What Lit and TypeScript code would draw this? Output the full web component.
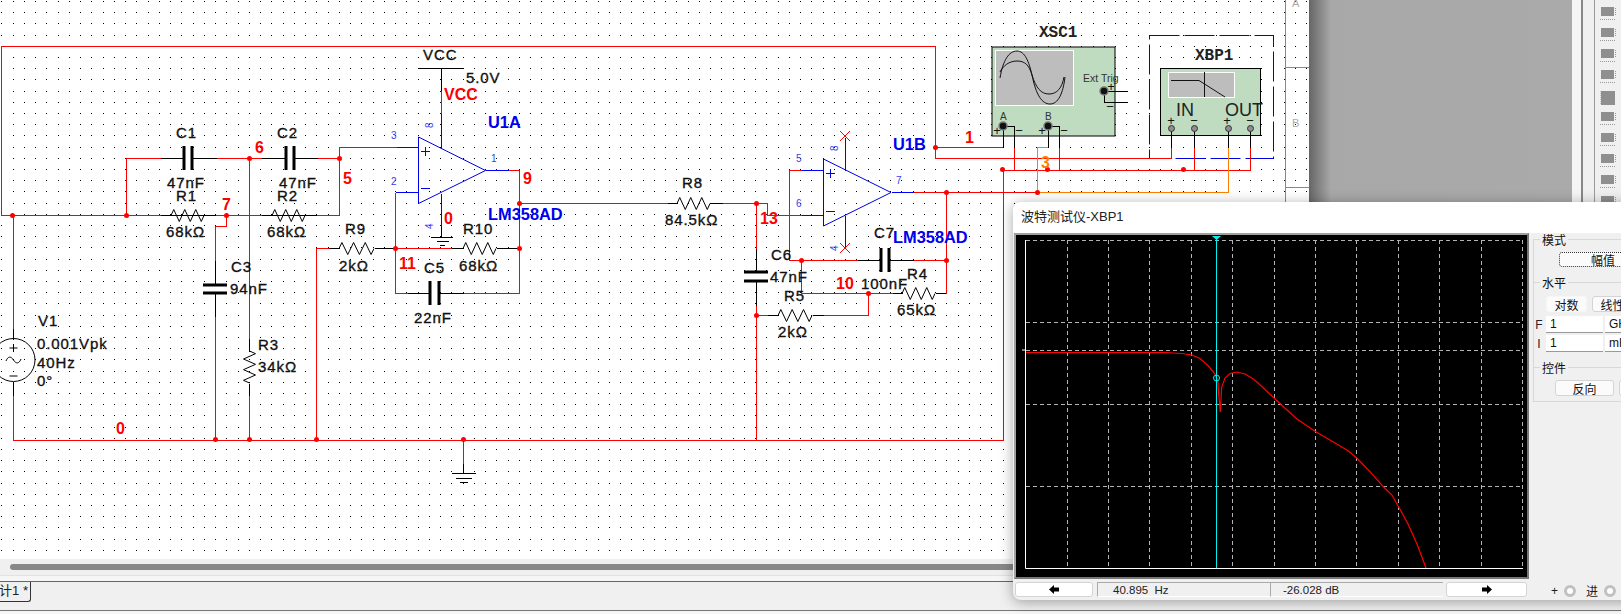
import { LitElement, css, html, svg } from 'lit'
import { customElement } from 'lit/decorators.js'

type Pt = [number, number]
type Wire = [string, ...Pt[]]

const RED = '#ff0000'
const BLK = '#000000'
const BLU = '#0000ff'
const ORG = '#ff8000'

// schematic nets, in sheet pixels
const WIRES: Wire[] = [
  [RED, [1, 215], [1, 46], [935, 46], [935, 147], [1003, 147]],
  [BLK, [1003, 147], [1003, 126]],
  [RED, [935, 147], [935, 158], [1171, 158], [1171, 147]],
  [BLK, [1171, 147], [1171, 128]],
  [RED, [1, 215], [160, 215]],
  [BLK, [160, 215], [215, 215]],
  [RED, [215, 215], [261, 215]],
  [BLK, [261, 215], [316, 215]],
  [RED, [316, 215], [339, 215], [339, 147], [396, 147]],
  [BLU, [396, 147], [418, 147]],
  [RED, [13, 215], [13, 328]],
  [BLK, [13, 328], [13, 339]],
  [BLK, [13, 381], [13, 395]],
  [RED, [13, 395], [13, 440], [1003, 440], [1003, 170]],
  [RED, [1003, 170], [1250, 170], [1250, 147]],
  [BLK, [1250, 147], [1250, 128]],
  [RED, [1014, 170], [1014, 147]],
  [BLK, [1014, 147], [1014, 126], [1003, 126]],
  [RED, [1059, 170], [1059, 147]],
  [BLK, [1059, 147], [1059, 126], [1048, 126]],
  [RED, [1194, 170], [1194, 147]],
  [BLK, [1194, 147], [1194, 128]],
  [RED, [126, 215], [126, 158], [160, 158]],
  [BLK, [160, 158], [184, 158]],
  [BLK, [192, 158], [216, 158]],
  [RED, [216, 158], [261, 158]],
  [BLK, [261, 158], [286, 158]],
  [BLK, [294, 158], [317, 158]],
  [RED, [317, 158], [339, 158]],
  [RED, [226, 215], [226, 226], [215, 226], [215, 260]],
  [BLK, [215, 260], [215, 285]],
  [BLK, [215, 293], [215, 316]],
  [RED, [215, 316], [215, 440]],
  [RED, [249, 158], [249, 338]],
  [BLK, [249, 338], [249, 351]],
  [BLK, [249, 383], [249, 395]],
  [RED, [249, 395], [249, 440]],
  [RED, [316, 440], [316, 248], [328, 248]],
  [BLK, [328, 248], [339, 248]],
  [BLK, [374, 248], [395, 248]],
  [RED, [395, 248], [451, 248]],
  [BLK, [451, 248], [463, 248]],
  [BLK, [496, 248], [519, 248]],
  [RED, [395, 192], [395, 293], [407, 293]],
  [BLK, [407, 293], [430, 293]],
  [BLK, [439, 293], [463, 293]],
  [RED, [463, 293], [519, 293], [519, 170], [508, 170]],
  [BLU, [508, 170], [485, 170]],
  [BLU, [395, 192], [418, 192]],
  [BLU, [441, 148], [441, 113]],
  [RED, [441, 113], [441, 90]],
  [BLK, [441, 90], [441, 68]],
  [BLK, [418, 68], [463, 68]],
  [BLU, [441, 193], [441, 226]],
  [BLK, [441, 226], [441, 237]],
  [BLK, [430, 237], [452, 237]],
  [BLK, [436, 241], [448, 241]],
  [BLK, [439, 245], [444, 245]],
  [RED, [519, 203], [667, 203]],
  [BLK, [667, 203], [677, 203]],
  [BLK, [710, 203], [722, 203]],
  [RED, [722, 203], [767, 203], [767, 215], [801, 215]],
  [BLU, [801, 215], [823, 215]],
  [RED, [789, 260], [789, 170], [801, 170]],
  [BLU, [801, 170], [823, 170]],
  [RED, [756, 203], [756, 248]],
  [BLK, [756, 248], [756, 272]],
  [BLK, [756, 281], [756, 305]],
  [RED, [756, 305], [756, 440]],
  [RED, [756, 315], [767, 315]],
  [BLK, [767, 315], [778, 315]],
  [BLK, [812, 315], [823, 315]],
  [RED, [823, 315], [868, 315], [868, 293]],
  [RED, [801, 260], [801, 293], [892, 293]],
  [BLK, [892, 293], [902, 293]],
  [BLK, [935, 293], [946, 293]],
  [RED, [946, 293], [946, 192]],
  [RED, [789, 260], [857, 260]],
  [BLK, [857, 260], [881, 260]],
  [BLK, [889, 260], [913, 260]],
  [RED, [913, 260], [946, 260]],
  [BLU, [891, 192], [913, 192]],
  [RED, [913, 192], [1037, 192]],
  [ORG, [1037, 192], [1228, 192], [1228, 147]],
  [BLK, [1228, 147], [1228, 128]],
  [ORG, [1037, 192], [1037, 147], [1048, 147]],
  [BLK, [1048, 147], [1048, 126]],
  [BLU, [845, 170], [845, 137]],
  [BLU, [845, 215], [845, 248]],
  [RED, [463, 440], [463, 463]],
  [BLK, [463, 463], [463, 473]],
  [BLK, [451, 473], [475, 473]],
  [BLK, [455, 478], [471, 478]],
  [BLK, [459, 482], [467, 482]],
  [BLK, [1104, 91], [1127, 91]],
  [BLK, [1104, 91], [1104, 102], [1127, 102]],
]

const JUNCTIONS: Pt[] = [
  [12, 215], [126, 215], [249, 158], [226, 215], [339, 158], [395, 248], [519, 203], [519, 248],
  [756, 203], [756, 315], [801, 260], [946, 192], [946, 260], [868, 293], [935, 147], [1002, 169],
  [1047, 169], [1183, 169], [1037, 192], [215, 439], [249, 439], [316, 439], [463, 439],
]

// [x0, x1, y]
const RES_H: [number, number, number][] = [
  [171, 204, 215], [272, 305, 215], [339, 374, 248], [463, 496, 248],
  [677, 710, 203], [778, 812, 315], [902, 935, 293],
]

// x or y pair of plates, centre, half length
const CAP_V: [number, number, number, number][] = [
  [184, 192, 158, 12], [286, 294, 158, 12], [430, 439, 293, 12], [881, 889, 260, 12],
]
const CAP_H: [number, number, number, number][] = [
  [285, 293, 215, 12], [272, 281, 756, 12],
]

const LABELS: [string, number, number, string][] = [
  ['C1', 176, 138, 'lbl'], ['C2', 277, 138, 'lbl'], ['47nF', 167, 188, 'lbl'], ['47nF', 279, 188, 'lbl'],
  ['R1', 176, 201, 'lbl'], ['R2', 277, 201, 'lbl'], ['68kΩ', 166, 237, 'lbl'], ['68kΩ', 267, 237, 'lbl'],
  ['R9', 345, 234, 'lbl'], ['2kΩ', 339, 271, 'lbl'], ['R10', 463, 234, 'lbl'], ['68kΩ', 459, 271, 'lbl'],
  ['C5', 424, 273, 'lbl'], ['22nF', 414, 323, 'lbl'], ['C3', 231, 272, 'lbl'], ['94nF', 230, 294, 'lbl'],
  ['VCC', 423, 60, 'lbl'], ['5.0V', 466, 83, 'lbl'], ['V1', 38, 326, 'lbl'], ['0.001Vpk', 37, 349, 'lbl'],
  ['40Hz', 37, 368, 'lbl'], ['0°', 37, 386, 'lbl'], ['R3', 258, 350, 'lbl'], ['34kΩ', 258, 372, 'lbl'],
  ['R8', 682, 188, 'lbl'], ['84.5kΩ', 665, 225, 'lbl'], ['C6', 771, 260, 'lbl'], ['47nF', 770, 282, 'lbl'],
  ['C7', 874, 238, 'lbl'], ['100nF', 861, 289, 'lbl'], ['R4', 907, 279, 'lbl'], ['R5', 784, 301, 'lbl'],
  ['65kΩ', 897, 315, 'lbl'], ['2kΩ', 778, 337, 'lbl'],
  ['6', 255, 153, 'net'], ['5', 343, 184, 'net'], ['7', 222, 210, 'net'], ['11', 399, 269, 'net'],
  ['VCC', 444, 100, 'net'], ['9', 523, 184, 'net'], ['0', 444, 224, 'net'], ['0', 116, 434, 'net'],
  ['1', 965, 143, 'net'], ['13', 760, 224, 'net'], ['10', 836, 289, 'net'], ['3', 1041, 168, 'net orange'],
  ['U1A', 488, 128, 'ref'], ['LM358AD', 488, 220, 'ref'], ['U1B', 893, 150, 'ref'], ['LM358AD', 893, 243, 'ref'],
  ['3', 391, 139, 'pin'], ['1', 491, 162, 'pin'], ['2', 391, 185, 'pin'], ['5', 796, 162, 'pin'], ['7', 896, 184, 'pin'], ['6', 796, 207, 'pin'],
  ['XSC1', 1039, 37, 'inst'], ['XBP1', 1195, 60, 'inst'],
  ['Ext Trig', 1083, 82, 'trig'], ['A', 1000, 120, 'term'], ['B', 1045, 120, 'term'],
  ['IN', 1176, 116, 'io'], ['OUT', 1225, 116, 'io'],
]

const ROTATED: [string, number, number][] = [['8', 433, 128], ['4', 433, 229], ['8', 838, 151], ['4', 838, 251]]

const MARKS: [string, number, number][] = [
  ['+', 997, 135], ['−', 1019, 135], ['+', 1042, 135], ['−', 1064, 135],
  ['+', 1111, 91], ['−', 1110, 111],
  ['+', 1171, 125], ['−', 1194, 125], ['+', 1227, 125], ['−', 1250, 125],
]

const dotPath = () => {
  let d = ''
  for (let i = 0; i < 117; i++) {
    for (let j = 0; j < 50; j++) {
      d += `M${Math.ceil(1 + i * 11.25)} ${Math.round(1 + j * 11.2)}h1v1h-1z`
    }
  }
  return d
}
const DOTS = dotPath()

const zigH = (x0: number, x1: number, y: number) => {
  const s = (x1 - x0) / 6
  let d = `M${x0} ${y + 0.5}`
  for (let i = 0; i < 6; i++) {
    d += `L${x0 + s * (i + 0.5)} ${y + 0.5 + (i % 2 ? 6 : -6)}`
  }
  return d + `L${x1} ${y + 0.5}`
}

const zigV = (x: number, y0: number, y1: number) => {
  const s = (y1 - y0) / 6
  let d = `M${x + 0.5} ${y0}`
  for (let i = 0; i < 6; i++) {
    d += `L${x + 0.5 + (i % 2 ? -6 : 6)} ${y0 + s * (i + 0.5)}`
  }
  return d + `L${x + 0.5} ${y1}`
}

const GRID_X = Array.from({ length: 12 }, (_, i) => 1066.5 + i * 41.4)
const GRID_Y = [241, 323, 351, 405, 487]

const CURVE = 'M1026 353.5H1165L1182 354.5L1192 356L1200 359.5L1208 366.5L1215 375L1218 383L1218.6 394L1220.3 413L1221.7 388L1225 379L1230 374.5L1237 373L1245 375L1251 378.5L1257 383L1273 398L1287 411L1297 420L1315 432.3L1333 442.7L1348 451.7L1357 459.3L1370 472.7L1383 487.3L1392 496L1398 506.7L1408 525L1417 545L1426 569'

@customElement('app-root')
export class AppRoot extends LitElement {
  static styles = css`
    :host {
      display: block;
      font-family: "Liberation Sans", "Noto Sans CJK SC", sans-serif;
    }
    .app {
      position: relative;
      width: 1621px;
      height: 614px;
      overflow: hidden;
      background: #f0f0f0;
      display: flex;
      flex-direction: column;
    }
    .main {
      display: flex;
      height: 559px;
    }
    .sheet {
      display: block;
      width: 1309px;
      height: 559px;
      flex-shrink: 0;
      background: #fff;
    }
    .sheet .lbl {
      font: 15px "Liberation Sans", sans-serif;
      letter-spacing: 0.9px;
      fill: #111;
      stroke: #111;
      stroke-width: 0.35px;
    }
    .sheet .net {
      font: bold 16px "Liberation Sans", sans-serif;
      fill: #f00;
    }
    .sheet .orange {
      fill: #ff8000;
    }
    .sheet .ref {
      font: bold 16.4px "Liberation Sans", sans-serif;
      fill: #0000ee;
    }
    .sheet .pin {
      font: 10px "Liberation Sans", sans-serif;
      fill: #3a3aee;
    }
    .sheet .inst {
      font: bold 16px "Liberation Mono", monospace;
      fill: #222;
    }
    .sheet .trig {
      font: 10.5px "Liberation Sans", sans-serif;
      fill: #333;
    }
    .sheet .term {
      font: 10px "Liberation Sans", sans-serif;
      fill: #333;
    }
    .sheet .io {
      font: 18px "Liberation Sans", sans-serif;
      fill: #222;
    }
    .sheet .mark {
      font: 13px "Liberation Sans", sans-serif;
      fill: #111;
      text-anchor: middle;
    }
    .sheet .ruler {
      font: 11px "Liberation Sans", sans-serif;
      fill: #aaa;
    }
    .gutter {
      flex: 1;
      background: linear-gradient(90deg, #666 0, #a8a8a8 22px, #aaa 100%);
    }
    .side {
      width: 49px;
      flex-shrink: 0;
      display: flex;
      background: #f0f0f0;
    }
    .side-a {
      width: 9px;
      background: #f5f5f5;
      border-right: 2px solid #888;
    }
    .side-b {
      width: 11px;
      border-right: 1px solid #999;
    }
    .side-icons {
      flex: 1;
      padding: 7px 0 0 5px;
      display: flex;
      flex-direction: column;
      gap: 7px;
    }
    .side-icons svg {
      display: block;
      flex-shrink: 0;
    }
    .hscroll {
      height: 17px;
      box-sizing: border-box;
      padding: 5px 0 0 10px;
      border-bottom: 1px solid #e2e2e2;
    }
    .thumb {
      width: 1300px;
      height: 6px;
      border-radius: 3px;
      background: #888;
    }
    .tabbar {
      flex: 1;
      padding-top: 5px;
      background: #f6f6f6;
    }
    .tabstrip {
      height: 28px;
      border-top: 1px solid #666;
      border-bottom: 1px solid #777;
      background: #f0f0f0;
    }
    .tab {
      width: 31px;
      height: 20px;
      box-sizing: border-box;
      border-right: 1px solid #333;
      border-bottom: 1px solid #333;
      border-bottom-right-radius: 3px;
      overflow: hidden;
      display: flex;
      justify-content: flex-end;
      white-space: nowrap;
      padding-right: 2px;
      font-size: 13px;
      line-height: 17px;
      color: #222;
    }
    .window {
      position: absolute;
      left: 1013px;
      top: 202px;
      width: 640px;
      height: 398px;
      display: flex;
      flex-direction: column;
      background: #f0f0f0;
      border-radius: 8px;
      box-shadow: 0 2px 14px rgba(0, 0, 0, 0.35);
      overflow: hidden;
    }
    .title {
      height: 31px;
      flex-shrink: 0;
      background: #fff;
      padding-left: 8px;
      font-size: 13px;
      line-height: 29px;
      color: #222;
    }
    .body {
      display: flex;
      height: 346px;
      flex-shrink: 0;
    }
    .plot {
      margin-left: 1px;
      width: 515px;
      height: 346px;
      flex-shrink: 0;
      box-sizing: border-box;
      border: 2px solid #a0a0a0;
      border-right-color: #777;
      border-bottom-color: #777;
      background: #000;
    }
    .plot svg {
      display: block;
    }
    .panel {
      flex: 1;
      margin: 6px 0 0 4px;
      height: 163px;
      box-sizing: border-box;
      border-left: 1px solid #d8d8d8;
      border-bottom: 1px solid #d8d8d8;
      font-size: 12px;
      color: #111;
    }
    .head {
      display: flex;
      align-items: center;
      height: 14px;
      gap: 2px;
    }
    .head.first {
      margin-top: -7px;
    }
    .head::before {
      content: "";
      width: 6px;
      height: 1px;
      background: #d8d8d8;
    }
    .head::after {
      content: "";
      flex: 1;
      height: 1px;
      background: #d8d8d8;
    }
    .btn {
      box-sizing: border-box;
      display: flex;
      align-items: center;
      justify-content: center;
      background: #fbfbfb;
      border: 1px solid #d4d4d4;
      border-radius: 3px;
      font-size: 12px;
    }
    .mode {
      width: 88px;
      height: 15px;
      margin: 6px 0 8px 25px;
      border: 1px dotted #333;
    }
    .row {
      display: flex;
      gap: 5px;
      margin: 7px 0 4px 12px;
    }
    .row .btn {
      width: 41px;
      height: 16px;
    }
    .row .plain {
      border-color: #f6f6f6;
    }
    .field {
      display: flex;
      align-items: center;
      margin-top: 2px;
      height: 17px;
      gap: 2px;
    }
    .field b {
      width: 10px;
      font: 12px "Liberation Sans", sans-serif;
      color: #223;
      text-align: center;
    }
    .input {
      width: 57px;
      height: 100%;
      box-sizing: border-box;
      padding-left: 4px;
      background: #fff;
      border-bottom: 1px solid #999;
      line-height: 16px;
    }
    .unit {
      width: 40px;
      height: 100%;
      box-sizing: border-box;
      padding-left: 4px;
      background: #fff;
      border-bottom: 1px solid #999;
      line-height: 16px;
    }
    .last {
      margin-top: 8px;
    }
    .controls {
      display: flex;
      gap: 5px;
      margin: 6px 0 0 21px;
    }
    .controls .btn {
      width: 59px;
      height: 16px;
    }
    .foot {
      display: flex;
      align-items: flex-start;
      padding: 3px 0 0 2px;
      font-size: 11.5px;
      color: #222;
    }
    .arrow {
      width: 78px;
      height: 15px;
      background: #fff;
    }
    .arrow.next {
      width: 81px;
    }
    .readout {
      width: 173px;
      height: 15px;
      box-sizing: border-box;
      border-top: 1px solid #aaa;
      border-left: 1px solid #aaa;
      border-bottom: 1px solid #fff;
      padding-left: 15px;
      line-height: 15px;
      white-space: pre;
    }
    .readout.a {
      margin-left: 4px;
    }
    .readout.b {
      margin-right: 3px;
      padding-left: 12px;
    }
    .term-group {
      display: flex;
      align-items: center;
      height: 17px;
      font-size: 12px;
      gap: 6px;
    }
    .term-group.plus {
      margin-left: 24px;
    }
    .term-group.in {
      margin-left: 10px;
    }
    .ring {
      width: 6px;
      height: 6px;
      border-radius: 50%;
      background: #fff;
      border: 3px solid #c0c0c0;
    }
  `

  private sheet() {
    return html`<svg class="sheet" width="1309" height="559" viewBox="0 0 1309 559">
      <path d=${DOTS} fill="#000" shape-rendering="crispEdges"></path>
      <g stroke="#888" stroke-width="1" shape-rendering="crispEdges">
        <path d="M1285.5 0V559M1285 67.5H1309M1285 187.5H1309"></path>
      </g>
      <text class="ruler" x="1292" y="7">A</text>
      <text class="ruler" x="1292" y="127">B</text>

      <rect x="992" y="47" width="123" height="89" fill="#c0dcc0" stroke="#000"></rect>
      <rect x="995.5" y="50.5" width="78" height="55" fill="#bdbdbd" stroke="#fff"></rect>
      <path d="M1000 78C1003 60 1009 51 1017 51C1025 51 1029 62 1032 75C1036 95 1042 104 1050 104C1058 104 1063 94 1065 77" fill="none" stroke="#111"></path>
      <path d="M1000 72C1003 66 1009 61 1017 61C1025 61 1029 65 1032 75C1036 88 1041 94 1049 94C1057 94 1062 88 1064 77" fill="none" stroke="#111"></path>

      <rect x="1149.5" y="35.5" width="124" height="123" fill="none" stroke="#0000e0" stroke-dasharray="30 5"></rect>
      <rect x="1160.5" y="68.5" width="100" height="67" fill="#c0dcc0" stroke="#000"></rect>
      <rect x="1168.5" y="72.5" width="66" height="25" fill="#bdbdbd" stroke="#fff"></rect>
      <path d="M1171 80.5H1199L1225 97M1204.5 72V97" fill="none" stroke="#111"></path>

      <g fill="none" stroke-width="1" shape-rendering="crispEdges" transform="translate(0.5 0.5)">
        ${WIRES.map(([c, ...p]) => svg`<polyline points=${p.map(q => q.join(',')).join(' ')} stroke=${c}></polyline>`)}
      </g>

      <g fill="none" stroke="#000" stroke-width="1">
        ${RES_H.map(([a, b, y]) => svg`<path d=${zigH(a, b, y)}></path>`)}
        <path d=${zigV(249, 351, 383)}></path>
        <circle cx="13.5" cy="360" r="21.5"></circle>
        <path d="M13.5 344V352M9.5 348H17.5M9.5 376H17.5M6 361C8 356 11 356 13.5 360C16 364 19 364 21 359"></path>
      </g>

      <g stroke="#000" stroke-width="3">
        ${CAP_V.map(([a, b, y, h]) => svg`<path d="M${a} ${y - h}V${y + h}M${b} ${y - h}V${y + h}"></path>`)}
        ${CAP_H.map(([a, b, x, h]) => svg`<path d="M${x - h} ${a}H${x + h}M${x - h} ${b}H${x + h}"></path>`)}
      </g>

      <g fill="none" stroke="#0000e6">
        <path d="M418.5 137V203.5L485.5 170.5Z"></path>
        <path d="M823.5 159V226L891 192.5Z"></path>
        <path d="M421 151.5H430M425.5 147V156M421 188.5H430"></path>
        <path d="M826 173.5H835M830.5 169V178M826 211.5H835"></path>
      </g>
      <path d="M840 131L850 141M850 131L840 141M840 243L850 253M850 243L840 253" stroke="#f00" fill="none"></path>

      ${JUNCTIONS.map(([x, y]) => svg`<circle cx=${x + 0.5} cy=${y + 0.5} r="2.5" fill="#f00"></circle>`)}

      ${[[1003, 126], [1048, 126], [1104, 91]].map(([x, y]) => svg`
        <circle cx=${x} cy=${y} r="4" fill="#111" stroke="#777" stroke-width="1.5"></circle>`)}
      ${[1171, 1194, 1228, 1250].map(x => svg`
        <circle cx=${x + 0.5} cy="128.5" r="3" fill="#918c91" stroke="#333"></circle>`)}

      ${MARKS.map(([t, x, y]) => svg`<text class="mark" x=${x} y=${y}>${t}</text>`)}
      ${LABELS.map(([t, x, y, c]) => svg`<text class=${c} x=${x} y=${y}>${t}</text>`)}
      ${ROTATED.map(([t, x, y]) => svg`<text class="pin" x=${x} y=${y} transform="rotate(-90 ${x} ${y})">${t}</text>`)}
    </svg>`
  }

  private plot() {
    return html`<div class="plot">
      <svg width="511" height="342" viewBox="1016 236 511 342">
        <g stroke="#b4b4b4" stroke-dasharray="4 3" fill="none">
          ${GRID_X.map(x => svg`<path d="M${Math.round(x) + 0.5} 241V569"></path>`)}
          ${GRID_Y.map(y => svg`<path d="M1026 ${y + 0.5}H1523"></path>`)}
        </g>
        <path d="M1025.5 241V569.5H1523M1022 351H1026" stroke="#fff" fill="none"></path>
        <path d=${CURVE} stroke="#f00" fill="none" stroke-width="1.2"></path>
        <path d="M1216.5 238V569" stroke="#00f0f0" fill="none"></path>
        <path d="M1212 237H1221L1216.5 241Z" fill="#00f0f0"></path>
        <circle cx="1216.5" cy="379" r="3" stroke="#00f0f0" fill="none"></circle>
      </svg>
    </div>`
  }

  private sideIcon(i: number) {
    return html`<svg width="16" height="14" viewBox="0 0 16 14">
      <rect x="1" y="0" width=${i === 4 ? 14 : 13} height=${i === 4 ? 14 : 9} fill="#8f8f8f"></rect>
      ${i === 4
        ? svg`<path d="M0 0V14" stroke="#999" stroke-dasharray="1 1"></path>`
        : svg`<path d="M0 12.5H16M15.5 1V9" stroke="#999" stroke-dasharray="1 1"></path>`}
    </svg>`
  }

  render() {
    return html`<div class="app">
      <div class="main">
        ${this.sheet()}
        <div class="gutter"></div>
        <div class="side">
          <div class="side-a"></div>
          <div class="side-b"></div>
          <div class="side-icons">
            ${[0, 1, 2, 3, 4, 5, 6, 7, 8, 9].map(i => this.sideIcon(i))}
          </div>
        </div>
      </div>
      <div class="hscroll"><div class="thumb"></div></div>
      <div class="tabbar">
        <div class="tabstrip"><div class="tab">设计1&nbsp;*</div></div>
      </div>

      <div class="window">
        <div class="title">波特测试仪-XBP1</div>
        <div class="body">
          ${this.plot()}
          <div class="panel">
            <div class="head first">模式</div>
            <div class="btn mode">幅值</div>
            <div class="head">水平</div>
            <div class="row">
              <div class="btn plain">对数</div>
              <div class="btn">线性</div>
            </div>
            <div class="field"><b>F</b><div class="input">1</div><div class="unit">GHz</div></div>
            <div class="field"><b>I</b><div class="input">1</div><div class="unit">mHz</div></div>
            <div class="head last">控件</div>
            <div class="controls">
              <div class="btn">反向</div>
              <div class="btn">保存</div>
            </div>
          </div>
        </div>
        <div class="foot">
          <div class="btn arrow">
            <svg width="10" height="9" viewBox="0 0 10 9"><path d="M0 4.5L5 0V2.5H10V6.5H5V9Z" fill="#000"></path></svg>
          </div>
          <div class="readout a">40.895  Hz</div>
          <div class="readout b">-26.028 dB</div>
          <div class="btn arrow next">
            <svg width="10" height="9" viewBox="0 0 10 9"><path d="M10 4.5L5 0V2.5H0V6.5H5V9Z" fill="#000"></path></svg>
          </div>
          <div class="term-group plus">+<span class="ring"></span></div>
          <div class="term-group in">进<span class="ring"></span></div>
        </div>
      </div>
    </div>`
  }
}

declare global {
  interface HTMLElementTagNameMap {
    'app-root': AppRoot
  }
}
